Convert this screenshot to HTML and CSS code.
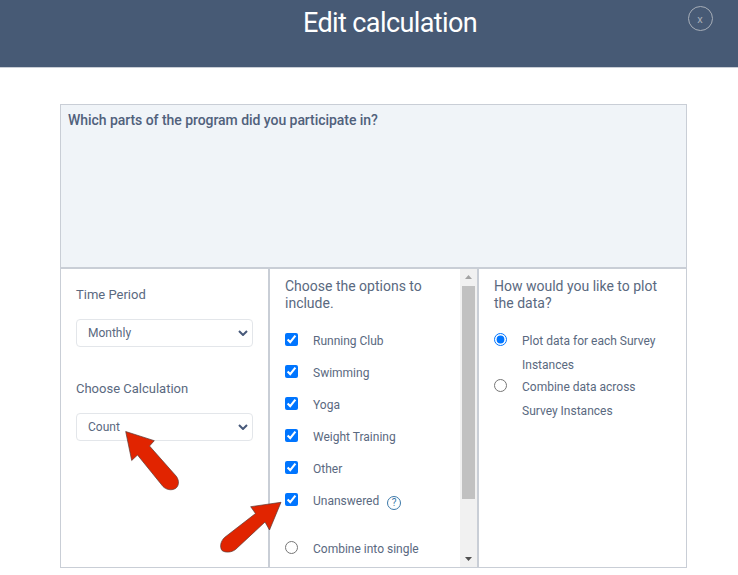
FILE: index.html
```html
<!DOCTYPE html>
<html lang="en">
<head>
<meta charset="utf-8">
<title>Edit calculation</title>
<link rel="stylesheet" href="styles.css">
</head>
<body>
<header class="modal-header">
  <h1 class="modal-title">Edit calculation</h1>
  <button class="close-btn" type="button">x</button>
</header>
<main class="editor">
  <section class="question"><p class="question-text">Which parts of the program did you participate in?</p></section>
  <section class="panels">
    <div class="panel panel-left">
      <label class="field-label">Time Period</label>
      <div class="select-wrap">
        <select class="field-select"><option>Monthly</option></select>
        <svg class="chevron" width="10" height="6" viewBox="0 0 10 6"><path d="M1 1 L5 5 L9 1" /></svg>
      </div>
      <label class="field-label field-label-second">Choose Calculation</label>
      <div class="select-wrap">
        <select class="field-select"><option>Count</option></select>
        <svg class="chevron" width="10" height="6" viewBox="0 0 10 6"><path d="M1 1 L5 5 L9 1" /></svg>
      </div>
    </div>
    <div class="panel panel-mid">
      <div class="scroll-content">
        <h2 class="panel-heading">Choose the options to include.</h2>
        <ul class="options">
          <li class="option"><input type="checkbox" checked><span>Running Club</span></li>
          <li class="option"><input type="checkbox" checked><span>Swimming</span></li>
          <li class="option"><input type="checkbox" checked><span>Yoga</span></li>
          <li class="option"><input type="checkbox" checked><span>Weight Training</span></li>
          <li class="option"><input type="checkbox" checked><span>Other</span></li>
          <li class="option"><input type="checkbox" checked><span>Unanswered</span><i class="help">?</i></li>
          <li class="option option-radio"><input type="radio" name="combine"><span>Combine into single</span></li>
        </ul>
      </div>
      <div class="scrollbar">
        <svg class="sb-arrow" width="17" height="17" viewBox="0 0 17 17"><path d="M8.5 6 L12 10 L5 10 Z" fill="#a3a3a3"/></svg>
        <div class="sb-thumb"></div>
        <svg class="sb-arrow sb-arrow-down" width="17" height="17" viewBox="0 0 17 17"><path d="M5 7 L12 7 L8.5 11 Z" fill="#505050"/></svg>
      </div>
    </div>
    <div class="panel panel-right">
      <h2 class="panel-heading">How would you like to plot the data?</h2>
      <ul class="plots">
        <li class="plot"><input type="radio" name="plot" checked><span>Plot data for each Survey Instances</span></li>
        <li class="plot"><input type="radio" name="plot"><span>Combine data across Survey Instances</span></li>
      </ul>
    </div>
  </section>
</main>
<svg class="annot" width="738" height="575" viewBox="0 0 738 575">
  <path class="arrow" d="M125.7 431.5 L154.3 440.7 L149.5 446 L176.5 476.5 C179.5 481 179 486 175.5 488.5 C171 491 166 489.5 163 486.5 L137.5 455 L131.7 460.5 Z"/>
  <path class="arrow" d="M281 502.3 L250.7 506.7 L255.5 513.5 L224.5 537.5 C220.5 541.5 219.5 547 222 550.5 C225.5 553 231.5 552.5 235.5 549.5 L265 522 L269.5 530 Z"/>
</svg>
</body>
</html>
```
FILE: styles.css
```css
* { box-sizing: border-box; }
html, body { margin: 0; height: 575px; overflow: hidden; }
body { background: #fff; font-family: Roboto, "Liberation Sans", sans-serif; color: #4a5a75; position: relative; }

.modal-header { height: 68px; background: #475a75; border-bottom: 1px solid #c9ced6; display: flex; justify-content: center; padding-left: 42px; position: relative; }
.modal-title { margin: 7px 0 0; font-size: 27px; font-weight: 400; line-height: 32px; letter-spacing: -.6px; color: #fff; }
.close-btn { position: absolute; left: 688px; top: 6px; width: 25px; height: 25px; padding: 1px 1px 0 0; border: 1px solid #a7aeb8; border-radius: 50%; background: transparent; color: #a7aeb8; font: 11px/1 Roboto, sans-serif; }

.editor { margin: 36px 51px 0 60px; width: 627px; height: 464px; display: flex; flex-direction: column; }
.question { height: 165px; background: #f0f4f8; border: 1px solid #c9ced6; border-bottom: 2px solid #c9ced6; padding: 7px 7px; }
.question-text { margin: 0; font-size: 14px; font-weight: 500; line-height: 17px; letter-spacing: -.05px; color: #50617c; }

.panels { flex: 1; display: grid; grid-template-columns: 208px 209px 210px; min-height: 0; border-bottom: 1px solid #c9ced6; }
.panel { min-height: 0; overflow: hidden; }
.panel-left { border-left: 1px solid #c9ced6; padding: 18px 15px 0 15px; display: flex; flex-direction: column; align-items: flex-start; }
.panel-mid { border-left: 2px solid #c9ced6; display: flex; }
.panel-right { border-left: 2px solid #c9ced6; border-right: 1px solid #c9ced6; padding: 9px 15px 0 15px; }

.field-label { font-size: 13px; line-height: 15px; color: #5a6980; }
.field-label-second { margin-top: 34px; }
.select-wrap { margin-top: 17px; position: relative; width: 177px; height: 28px; }
.field-select { appearance: none; display: block; width: 100%; height: 100%; padding: 0 8px 1px 11px; background: #fff; border: 1px solid #e3e6ea; border-radius: 4px; font: 12px Roboto, sans-serif; color: #5a6980; }
.chevron { position: absolute; right: 5px; top: 11px; }
.chevron path { fill: none; stroke: #47597a; stroke-width: 2; }

.scroll-content { flex: 1; min-width: 0; padding: 9px 15px 0 15px; }
.panel-heading { margin: 0; font-size: 14px; font-weight: 400; line-height: 17px; color: #5a6980; }
.options, .plots { list-style: none; margin: 0; padding: 0; }
.options { margin-top: 13px; }
.option { height: 32px; display: flex; align-items: center; font-size: 12px; color: #5a6980; }
.option input { margin: 0 15px 4px 0; width: 13px; height: 13px; flex: none; }
.plot input { margin: 4px 15px 0 0; width: 13px; height: 13px; flex: none; }
.option-radio { margin-top: 16px; }
.help { margin-left: 8px; width: 14px; height: 14px; margin-top: 3px; border: 1px solid #3b78a8; border-radius: 50%; font: 10px/12px Roboto, sans-serif; text-align: center; color: #3b78a8; }

.scrollbar { width: 17px; flex: none; background: #f1f1f1; display: flex; flex-direction: column; }
.sb-arrow { flex: none; display: block; }
.sb-thumb { margin: 0 2px; height: 213px; background: #c1c1c1; }
.sb-arrow-down { margin-top: auto; }

.plots { margin-top: 17px; }
.plot { display: flex; height: 46px; align-items: flex-start; font-size: 12px; line-height: 24px; color: #5a6980; }

.annot { position: absolute; left: 0; top: 0; pointer-events: none; }
.arrow { fill: #e12400; stroke: #5b3a34; stroke-width: .7; }
```
